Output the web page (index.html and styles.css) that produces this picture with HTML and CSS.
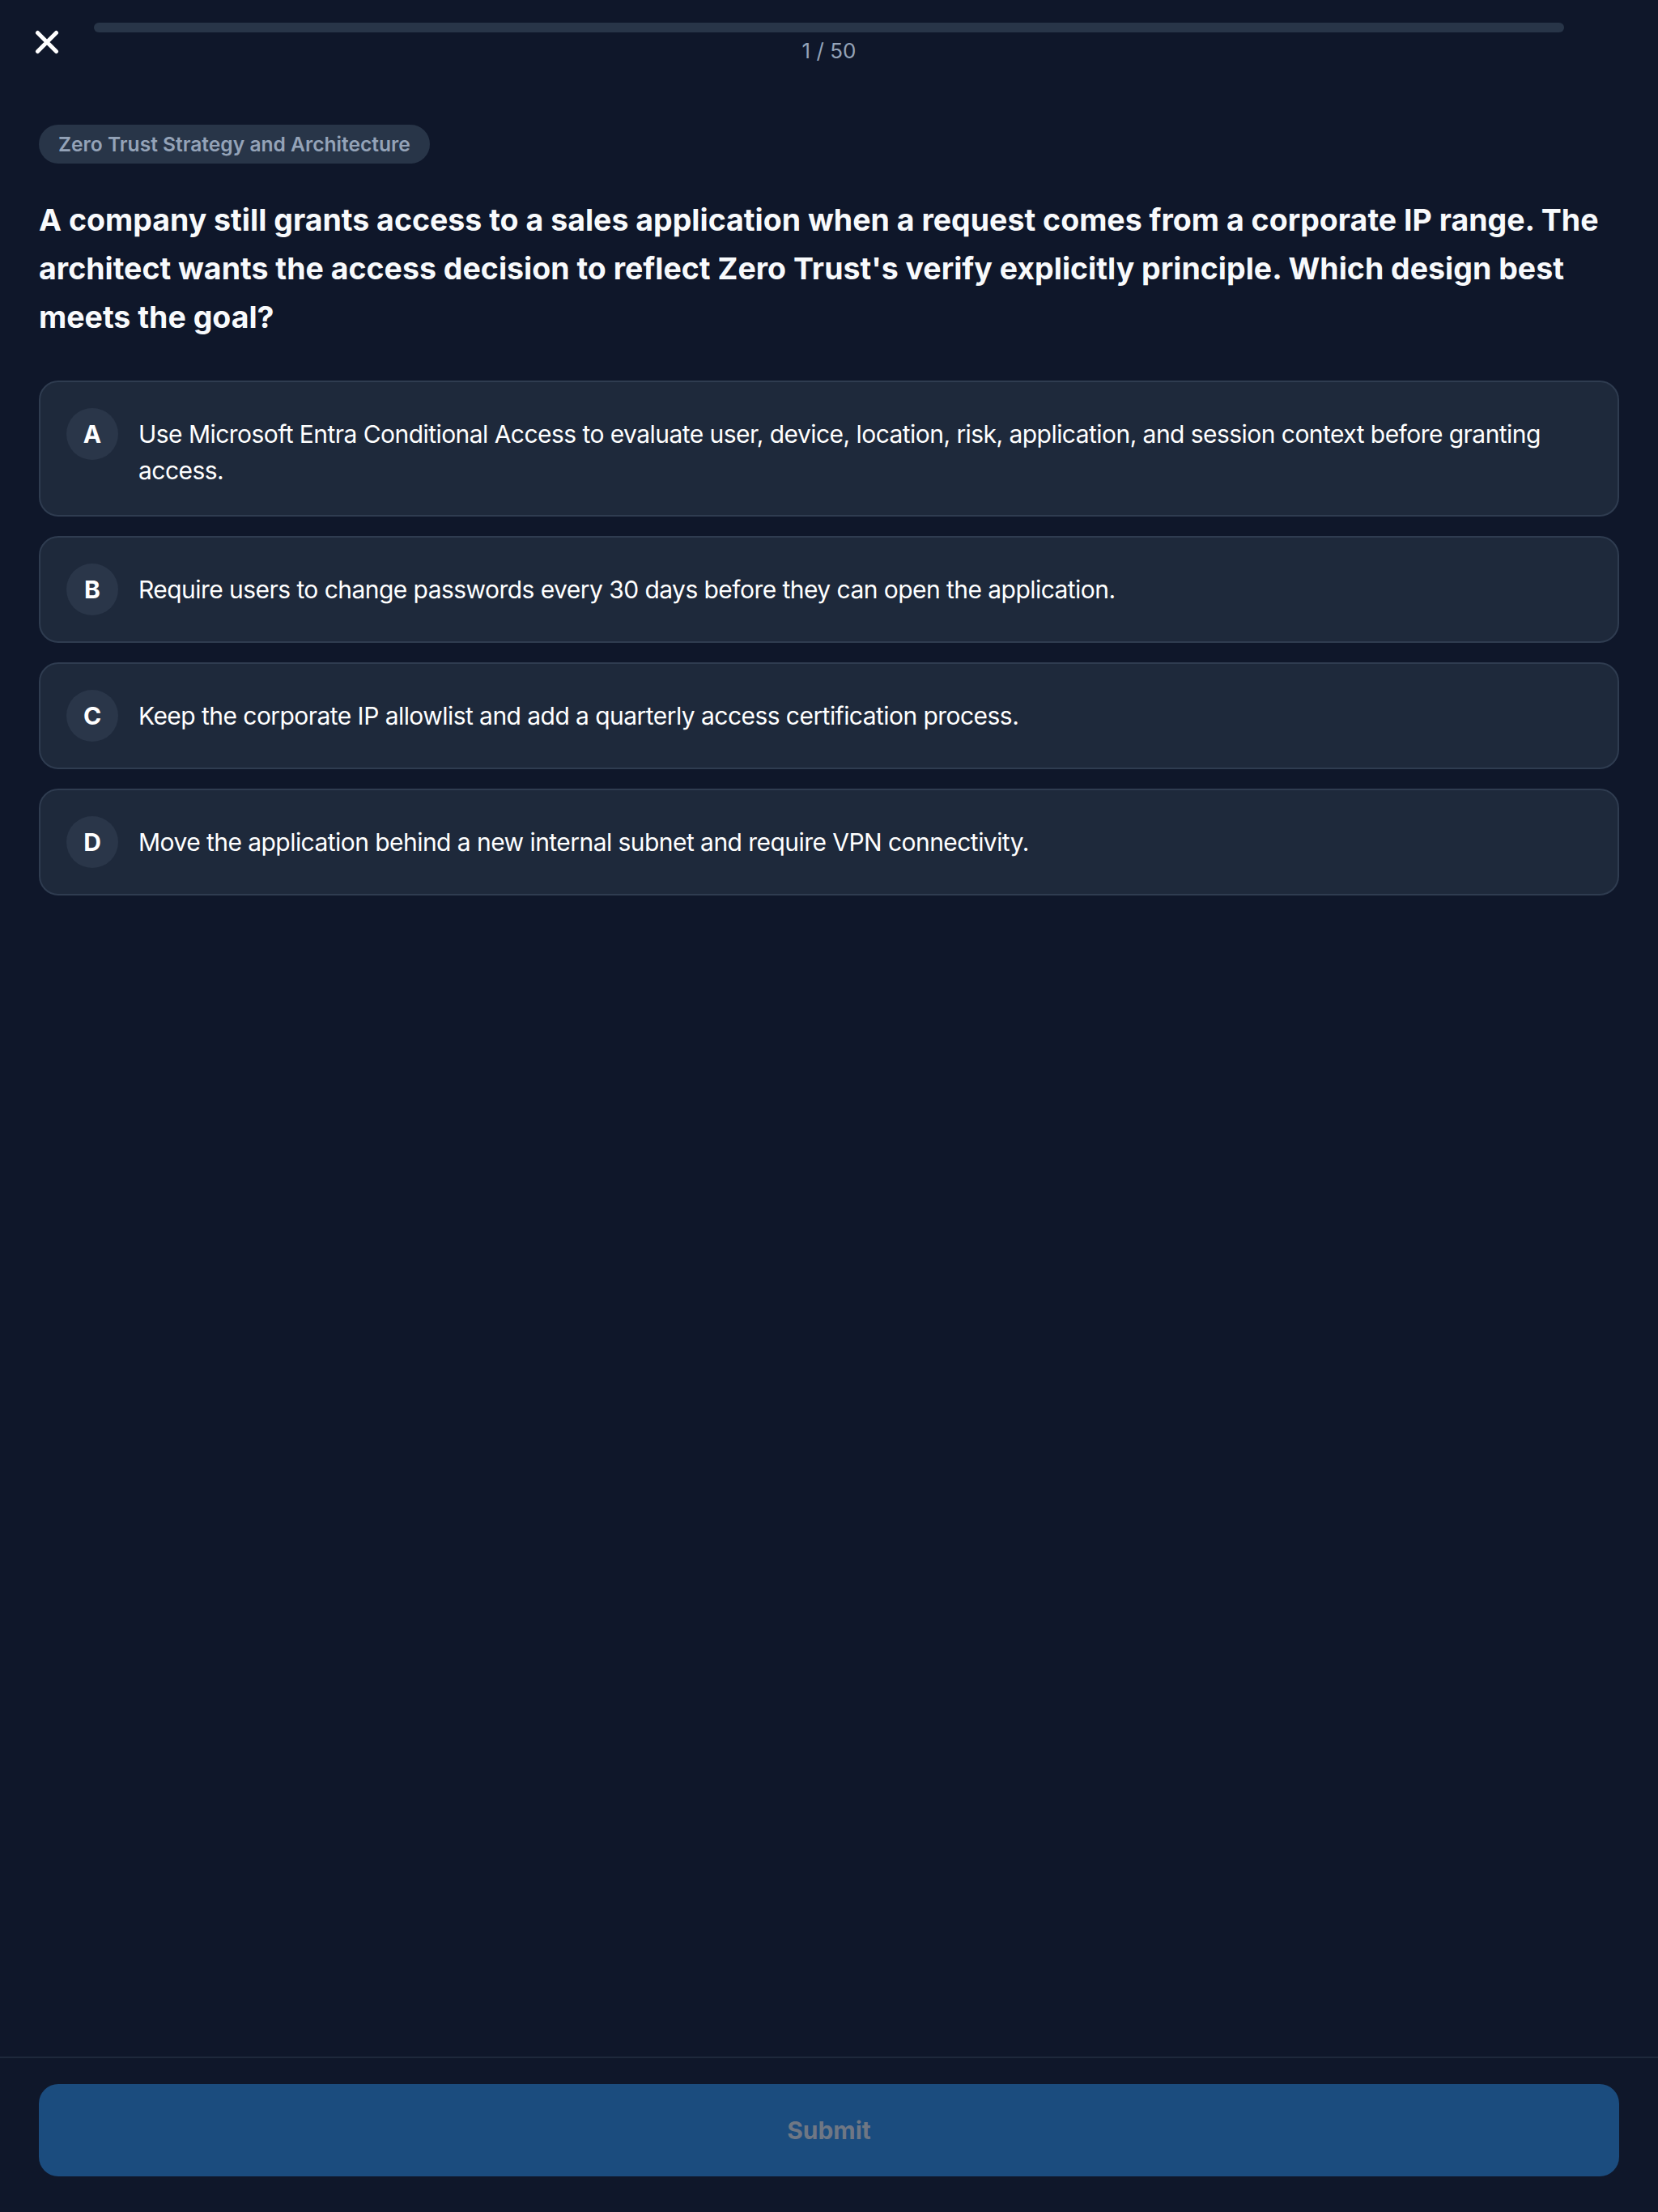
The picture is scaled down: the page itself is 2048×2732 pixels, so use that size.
FILE: index.html
```html
<!DOCTYPE html>
<html lang="en">
<head>
  <meta charset="UTF-8">
  <meta name="viewport" content="width=device-width, initial-scale=1.0">
  <title>Practice Quiz</title>
  <link rel="stylesheet" href="styles.css">
</head>
<body>

  <!-- Top bar: close button, progress and counter -->
  <header class="quiz-header">
    <button class="close-btn" aria-label="Close">
      <svg width="30" height="30" viewBox="0 0 30 30">
        <path d="M3.5 3.5 L26.5 26.5 M26.5 3.5 L3.5 26.5" stroke="#ffffff" stroke-width="5" stroke-linecap="round" fill="none"/>
      </svg>
    </button>
    <div class="progress">
      <div class="progress-track"><div class="progress-fill" style="width: 0%;"></div></div>
      <div class="progress-count">1 / 50</div>
    </div>
    <div class="header-spacer"></div>
  </header>

  <!-- Question -->
  <main class="quiz-body">
    <span class="topic-tag">Zero Trust Strategy and Architecture</span>
    <h1 class="question">A company still grants access to a sales application when a request comes from a corporate IP range. The architect wants the access decision to reflect Zero Trust's verify explicitly principle. Which design best meets the goal?</h1>

    <div class="options">
      <div class="option">
        <span class="option-letter">A</span>
        <span class="option-text">Use Microsoft Entra Conditional Access to evaluate user, device, location, risk, application, and session context before granting access.</span>
      </div>
      <div class="option">
        <span class="option-letter">B</span>
        <span class="option-text">Require users to change passwords every 30 days before they can open the application.</span>
      </div>
      <div class="option">
        <span class="option-letter">C</span>
        <span class="option-text">Keep the corporate IP allowlist and add a quarterly access certification process.</span>
      </div>
      <div class="option">
        <span class="option-letter">D</span>
        <span class="option-text">Move the application behind a new internal subnet and require VPN connectivity.</span>
      </div>
    </div>
  </main>

  <!-- Bottom action -->
  <footer class="quiz-footer">
    <button class="submit-btn" disabled>Submit</button>
  </footer>

</body>
</html>
```

FILE: styles.css
```css
/* General */
* {
  box-sizing: border-box;
}

body {
  margin: 0;
  height: 2732px;
  display: flex;
  flex-direction: column;
  background-color: #0f172a;
  font-family: Inter, "Noto Sans", Arial, sans-serif;
  color: #f8fafc;
  overflow: hidden;
}

/* Header */
.quiz-header {
  display: grid;
  grid-template-columns: 116px 1fr 116px;
  padding-top: 28px;
}

.close-btn {
  width: 116px;
  height: 48px;
  padding: 9px 0 0;
  background: none;
  border: none;
  display: flex;
  justify-content: center;
  align-items: flex-start;
  cursor: pointer;
}

.progress {
  display: flex;
  flex-direction: column;
  align-items: center;
  gap: 3px;
}

.progress-track {
  width: 100%;
  height: 12px;
  border-radius: 6px;
  background-color: #283548;
  overflow: hidden;
}

.progress-fill {
  height: 100%;
  background-color: #3b82f6;
}

.progress-count {
  font-size: 26px;
  line-height: 40px;
  color: #94a3b8;
}

/* Question area */
.quiz-body {
  flex: 1;
  display: flex;
  flex-direction: column;
  align-items: flex-start;
  padding: 71px 48px 0;
}

.topic-tag {
  display: inline-block;
  height: 48px;
  padding: 0 24px;
  border-radius: 24px;
  background-color: #283548;
  color: #94a3b8;
  font-size: 24.6px;
  font-weight: 600;
  line-height: 48px;
}

.question {
  margin: 40px 0 48px;
  font-size: 37.5px;
  font-weight: 700;
  line-height: 60px;
  color: #f8fafc;
}

.options {
  width: 100%;
  display: flex;
  flex-direction: column;
  gap: 24px;
}

.option {
  display: flex;
  align-items: flex-start;
  gap: 25px;
  padding: 32px;
  border: 2px solid #2f3c50;
  border-radius: 24px;
  background-color: #1e293b;
  cursor: pointer;
}

.option-letter {
  flex: none;
  width: 64px;
  height: 64px;
  border-radius: 50%;
  background-color: #2a3649;
  display: flex;
  justify-content: center;
  align-items: center;
  font-size: 30px;
  font-weight: 700;
  color: #ffffff;
}

.option-text {
  margin-top: 10px;
  font-size: 30px;
  letter-spacing: -0.55px;
  line-height: 45px;
  color: #ffffff;
}

/* Footer */
.quiz-footer {
  border-top: 2px solid #1e293b;
  padding: 32px 48px 44px;
}

.submit-btn {
  width: 100%;
  height: 114px;
  border: none;
  border-radius: 24px;
  background-color: #1b4c7e;
  color: #6f7784;
  font-family: Inter, "Noto Sans", Arial, sans-serif;
  font-size: 30px;
  font-weight: 700;
}
```
